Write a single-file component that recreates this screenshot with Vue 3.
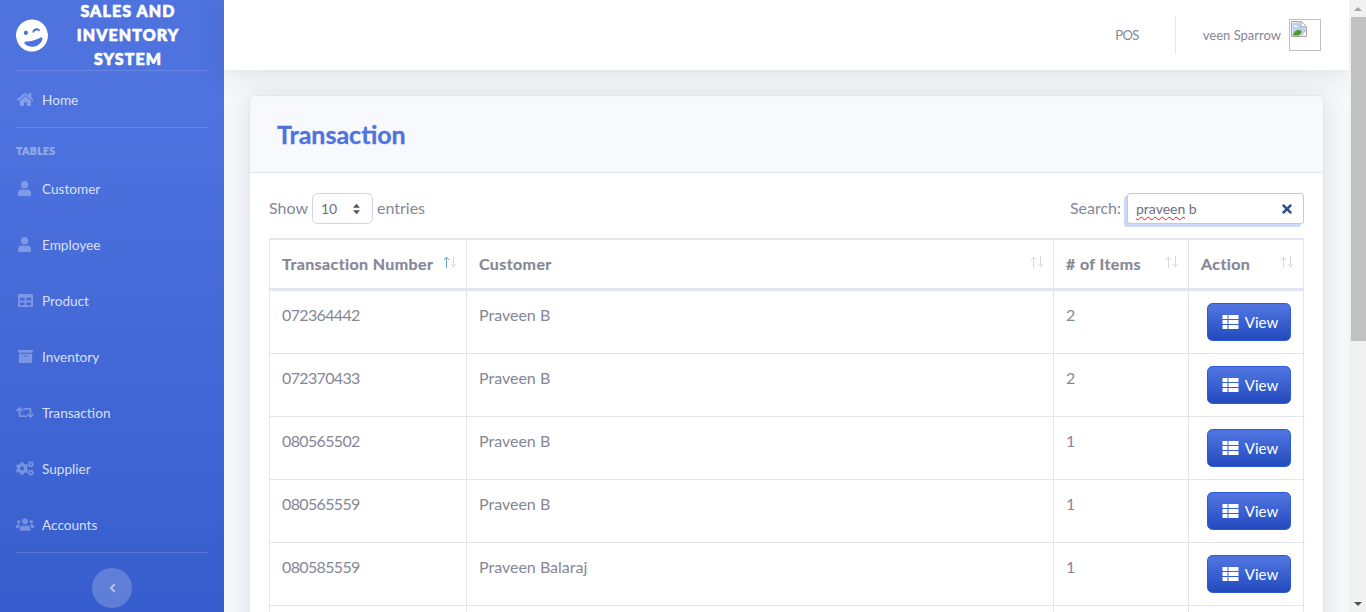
<script setup>
const icons = {
  home: { vb: '0 0 576 512', d: 'M280.37 148.26L96 300.11V464a16 16 0 0 0 16 16l112.06-.29a16 16 0 0 0 15.92-16V368a16 16 0 0 1 16-16h64a16 16 0 0 1 16 16v95.64a16 16 0 0 0 16 16.05L464 480a16 16 0 0 0 16-16V300L295.67 148.26a12.19 12.19 0 0 0-15.3 0zM571.6 251.47L488 182.56V44.05a12 12 0 0 0-12-12h-56a12 12 0 0 0-12 12v72.61L318.47 43a48 48 0 0 0-61 0L4.34 251.47a12 12 0 0 0-1.6 16.9l25.5 31A12 12 0 0 0 45.15 301l235.22-193.74a12.19 12.19 0 0 1 15.3 0L530.9 301a12 12 0 0 0 16.9-1.6l25.5-31a12 12 0 0 0-1.7-16.93z' },
  user: { vb: '0 0 448 512', d: 'M224 256c70.7 0 128-57.3 128-128S294.7 0 224 0 96 57.3 96 128s57.3 128 128 128zm89.6 32h-16.7c-22.2 10.2-46.9 16-72.9 16s-50.6-5.8-72.9-16h-16.7C60.2 288 0 348.2 0 422.4V464c0 26.5 21.5 48 48 48h352c26.5 0 48-21.5 48-48v-41.6c0-74.2-60.2-134.4-134.4-134.4z' },
  table: { vb: '0 0 512 512', d: 'M464 32H48C21.49 32 0 53.49 0 80v352c0 26.51 21.49 48 48 48h416c26.51 0 48-21.49 48-48V80c0-26.51-21.49-48-48-48zM224 416H64v-96h160v96zm0-160H64v-96h160v96zm224 160H288v-96h160v96zm0-160H288v-96h160v96z' },
  archive: { vb: '0 0 512 512', d: 'M32 448c0 17.7 14.3 32 32 32h384c17.7 0 32-14.3 32-32V160H32v288zm160-212c0-6.6 5.4-12 12-12h104c6.6 0 12 5.4 12 12v8c0 6.6-5.4 12-12 12H204c-6.6 0-12-5.4-12-12v-8zM480 32H32C14.3 32 0 46.3 0 64v48c0 8.8 7.2 16 16 16h480c8.8 0 16-7.2 16-16V64c0-17.7-14.3-32-32-32z' },
  retweet: { vb: '0 0 640 512', d: 'M629.657 343.598L528.971 444.284c-9.373 9.372-24.568 9.372-33.941 0L394.343 343.598c-9.373-9.373-9.373-24.569 0-33.941l10.823-10.823c9.562-9.562 25.133-9.34 34.419.492L480 342.118V160H292.451a24.005 24.005 0 0 1-16.971-7.029l-16-16C244.361 121.851 255.069 96 276.451 96H520c13.255 0 24 10.745 24 24v222.118l40.416-42.792c9.285-9.831 24.856-10.054 34.419-.492l10.823 10.823c9.372 9.372 9.372 24.568-.001 33.941zm-265.138 15.431A23.999 23.999 0 0 0 347.548 352H160V169.881l40.416 42.792c9.286 9.831 24.856 10.054 34.419.491l10.822-10.822c9.373-9.373 9.373-24.569 0-33.941L144.971 67.716c-9.373-9.373-24.569-9.373-33.941 0L10.343 168.402c-9.373 9.373-9.373 24.569 0 33.941l10.822 10.822c9.562 9.562 25.133 9.34 34.419-.491L96 169.881V392c0 13.255 10.745 24 24 24h243.549c21.382 0 32.09-25.851 16.971-40.971l-16.001-16z' },
  cogs: { vb: '0 0 640 512', d: 'M512.1 191l-8.2 14.3c-3 5.3-9.4 7.5-15.1 5.4-11.8-4.4-22.6-10.7-32.1-18.6-4.6-3.8-5.8-10.5-2.8-15.7l8.2-14.3c-6.9-8-12.3-17.3-15.9-27.4h-16.5c-6 0-11.2-4.3-12.2-10.3-2-12-2.1-24.6 0-37.1 1-6 6.2-10.4 12.2-10.4h16.5c3.6-10.1 9-19.4 15.9-27.4l-8.2-14.3c-3-5.2-1.9-11.9 2.8-15.7 9.5-7.9 20.4-14.2 32.1-18.6 5.7-2.1 12.1.1 15.1 5.4l8.2 14.3c10.5-1.9 21.2-1.9 31.7 0L552 6.3c3-5.3 9.4-7.5 15.1-5.4 11.8 4.4 22.6 10.7 32.1 18.6 4.6 3.8 5.8 10.5 2.8 15.7l-8.2 14.3c6.9 8 12.3 17.3 15.9 27.4h16.5c6 0 11.2 4.3 12.2 10.3 2 12 2.1 24.6 0 37.1-1 6-6.2 10.4-12.2 10.4h-16.5c-3.6 10.1-9 19.4-15.9 27.4l8.2 14.3c3 5.2 1.9 11.9-2.8 15.7-9.5 7.9-20.4 14.2-32.1 18.6-5.7 2.1-12.1-.1-15.1-5.4l-8.2-14.3c-10.4 1.9-21.2 1.9-31.7 0zm-10.5-58.8c38.5 29.6 82.4-14.3 52.8-52.8-38.5-29.7-82.4 14.3-52.8 52.8zM386.3 286.1l33.7 16.8c10.1 5.8 14.5 18.1 10.5 29.1-8.9 24.2-26.4 46.4-42.6 65.8-7.4 8.9-20.2 11.1-30.3 5.3l-29.1-16.8c-16 13.7-34.6 24.6-54.9 31.7v33.6c0 11.6-8.3 21.6-19.7 23.6-24.6 4.2-50.4 4.4-75.9 0-11.5-2-20-11.9-20-23.6V418c-20.3-7.2-38.9-18-54.9-31.7L74 403c-10 5.8-22.9 3.6-30.3-5.3-16.2-19.4-33.3-41.6-42.2-65.7-4-10.9.4-23.2 10.5-29.1l33.3-16.8c-3.9-20.9-3.9-42.4 0-63.4L12 205.8c-10.1-5.8-14.6-18.1-10.5-29 8.9-24.2 26-46.4 42.2-65.8 7.4-8.9 20.2-11.1 30.3-5.3l29.1 16.8c16-13.7 34.6-24.6 54.9-31.7V57.1c0-11.5 8.2-21.5 19.6-23.5 24.6-4.2 50.5-4.4 76-.1 11.5 2 20 11.9 20 23.6v33.6c20.3 7.2 38.9 18 54.9 31.7l29.1-16.8c10-5.8 22.9-3.6 30.3 5.3 16.2 19.4 33.2 41.6 42.1 65.8 4 10.9.1 23.2-10 29.1l-33.7 16.8c3.9 21 3.9 42.5 0 63.5zm-117.6 21.1c59.2-77-28.7-164.9-105.7-105.7-59.2 77 28.7 164.9 105.7 105.7zm243.4 182.7l-8.2 14.3c-3 5.3-9.4 7.5-15.1 5.4-11.8-4.4-22.6-10.7-32.1-18.6-4.6-3.8-5.8-10.5-2.8-15.7l8.2-14.3c-6.9-8-12.3-17.3-15.9-27.4h-16.5c-6 0-11.2-4.3-12.2-10.3-2-12-2.1-24.6 0-37.1 1-6 6.2-10.4 12.2-10.4h16.5c3.6-10.1 9-19.4 15.9-27.4l-8.2-14.3c-3-5.2-1.9-11.9 2.8-15.7 9.5-7.9 20.4-14.2 32.1-18.6 5.7-2.1 12.1.1 15.1 5.4l8.2 14.3c10.5-1.9 21.2-1.9 31.7 0l8.2-14.3c3-5.3 9.4-7.5 15.1-5.4 11.8 4.4 22.6 10.7 32.1 18.6 4.6 3.8 5.8 10.5 2.8 15.7l-8.2 14.3c6.9 8 12.3 17.3 15.9 27.4h16.5c6 0 11.2 4.3 12.2 10.3 2 12 2.1 24.6 0 37.1-1 6-6.2 10.4-12.2 10.4h-16.5c-3.6 10.1-9 19.4-15.9 27.4l8.2 14.3c3 5.2 1.9 11.9-2.8 15.7-9.5 7.9-20.4 14.2-32.1 18.6-5.7 2.1-12.1-.1-15.1-5.4l-8.2-14.3c-10.4 1.9-21.2 1.9-31.7 0zM501.6 431c38.5 29.6 82.4-14.3 52.8-52.8-38.5-29.6-82.4 14.3-52.8 52.8z' },
  users: { vb: '0 0 640 512', d: 'M96 224c35.3 0 64-28.7 64-64s-28.7-64-64-64-64 28.7-64 64 28.7 64 64 64zm448 0c35.3 0 64-28.7 64-64s-28.7-64-64-64-64 28.7-64 64 28.7 64 64 64zm32 32h-64c-17.6 0-33.5 7.1-45.1 18.6 40.3 22.1 68.9 62 75.1 109.4h66c17.7 0 32-14.3 32-32v-32c0-35.3-28.7-64-64-64zm-256 0c61.9 0 112-50.1 112-112S381.9 32 320 32 208 82.1 208 144s50.1 112 112 112zm76.8 32h-8.3c-20.8 10-43.9 16-68.5 16s-47.6-6-68.5-16h-8.3C179.6 288 128 339.6 128 403.2V432c0 26.5 21.5 48 48 48h288c26.5 0 48-21.5 48-48v-28.8c0-63.6-51.6-115.2-115.2-115.2zm-223.7-13.4C161.5 263.1 145.6 256 128 256H64c-35.3 0-64 28.7-64 64v32c0 17.7 14.3 32 32 32h65.9c6.3-47.4 34.9-87.3 75.2-109.4z' }
}
const navItems = [
  { label: 'Customer', icon: 'user' },
  { label: 'Employee', icon: 'user' },
  { label: 'Product', icon: 'table' },
  { label: 'Inventory', icon: 'archive' },
  { label: 'Transaction', icon: 'retweet' },
  { label: 'Supplier', icon: 'cogs' },
  { label: 'Accounts', icon: 'users' }
]
const columns = [
  { label: 'Transaction Number', width: 197, active: true },
  { label: 'Customer', width: 587 },
  { label: '# of Items', width: 135 },
  { label: 'Action', width: 115 }
]
const rows = [
  { id: '072364442', name: 'Praveen B', items: 2 },
  { id: '072370433', name: 'Praveen B', items: 2 },
  { id: '080565502', name: 'Praveen B', items: 1 },
  { id: '080565559', name: 'Praveen B', items: 1 },
  { id: '080585559', name: 'Praveen Balaraj', items: 1 }
]
</script>

<template>
  <div class="page">
    <aside class="sidebar">
      <div class="brand">
        <svg class="brand-icon" viewBox="0 0 496 512"><path fill="#fff" d="M248 8C111 8 0 119 0 256s111 248 248 248 248-111 248-248S385 8 248 8zm20.1 198.1c4-25.2 34.2-42.1 59.9-42.1s55.9 16.9 59.9 42.1c1.7 11.1-11.4 18.3-19.8 10.8l-9.5-8.5c-14.8-13.2-46.2-13.2-61 0L288 217c-8.4 7.4-21.6.3-19.9-10.9zM168 160c17.7 0 32 14.3 32 32s-14.3 32-32 32-32-14.3-32-32 14.3-32 32-32zm80 272c-60.6 0-134.5-38.3-143.8-93.3-2-11.9 9.4-21.6 20.8-17.9C155.1 330.5 200 336 248 336s92.9-5.5 123-15.2c11.5-3.7 22.8 6.1 20.8 17.9-9.3 55-83.2 93.3-143.8 93.3z"/></svg>
        <div class="brand-text">SALES AND INVENTORY SYSTEM</div>
      </div>
      <hr class="divider" />
      <a class="nav-link">
        <span class="nav-icon"><svg :viewBox="icons.home.vb"><path :d="icons.home.d"/></svg></span>
        <span>Home</span>
      </a>
      <hr class="divider" />
      <div class="heading">TABLES</div>
      <a v-for="item in navItems" :key="item.label" class="nav-link">
        <span class="nav-icon"><svg :viewBox="icons[item.icon].vb"><path :d="icons[item.icon].d"/></svg></span>
        <span>{{ item.label }}</span>
      </a>
      <hr class="divider" />
      <div class="toggle-wrap">
        <button class="toggle">
          <svg viewBox="0 0 256 512"><path d="M31.7 239l136-136c9.4-9.4 24.6-9.4 33.9 0l22.6 22.6c9.4 9.4 9.4 24.6 0 33.9L127.9 256l96.4 96.4c9.4 9.4 9.4 24.6 0 33.9L201.7 409c-9.4 9.4-24.6 9.4-33.9 0l-136-136c-9.5-9.4-9.5-24.6-.1-34z"/></svg>
        </button>
      </div>
    </aside>

    <div class="main">
      <header class="topbar">
        <span class="top-link">POS</span>
        <span class="top-sep"></span>
        <span class="top-user">veen Sparrow</span>
        <span class="avatar">
          <svg viewBox="0 0 16 16" width="16" height="16">
            <path d="M.5.5h10l5 5v10H.5z" fill="#fff" stroke="#a8a8a8"/>
            <path d="M1.5 1.5h8.500v4.500h4.500v3L9 14.500H1.500z" fill="#bcd0f5"/>
            <path d="M1.500 14.500c1.500-4 4-6 6.500-5.500 1.500.3 2.500 1.500 3 2l-3 3.500z" fill="#4f9a2a"/>
            <path d="M3 4.500h3v1.500H3z" fill="#fff"/>
            <path d="M15 9l-5 6M10 .8v5h5" fill="none" stroke="#a8a8a8"/>
          </svg>
        </span>
      </header>

      <section class="content">
        <div class="card">
          <div class="card-head"><h1>Transaction</h1></div>
          <div class="card-body">
            <div class="tools">
              <div class="show">
                <span class="label">Show</span>
                <span class="select">
                  <span>10</span>
                  <svg viewBox="0 0 10 14" width="9" height="12"><path d="M5 1l4 4.500H1zM5 13l4-4.500H1z" fill="#4f5263"/></svg>
                </span>
                <span class="label">entries</span>
              </div>
              <div class="search">
                <span class="label search-label">Search:</span>
                <span class="search-box">
                  <span class="search-text"><span class="misspelt">praveen</span> b</span>
                  <svg viewBox="0 0 352 512" width="10" height="14"><path fill="#2c4f8f" d="M242.72 256l100.07-100.07c12.28-12.28 12.28-32.19 0-44.48l-22.24-22.24c-12.28-12.28-32.19-12.28-44.48 0L176 189.28 75.93 89.21c-12.28-12.28-32.19-12.28-44.48 0L9.21 111.45c-12.28 12.28-12.28 32.19 0 44.48L109.28 256 9.21 356.07c-12.28 12.28-12.28 32.19 0 44.48l22.24 22.24c12.28 12.28 32.2 12.28 44.48 0L176 322.72l100.07 100.07c12.28 12.28 32.2 12.28 44.48 0l22.24-22.24c12.28-12.28 12.28-32.19 0-44.48L242.72 256z"/></svg>
                </span>
              </div>
            </div>

            <table class="grid">
              <colgroup>
                <col v-for="c in columns" :key="c.label" :style="{ width: c.width + 'px' }" />
              </colgroup>
              <thead>
                <tr>
                  <th v-for="c in columns" :key="c.label">
                    {{ c.label }}
                    <svg class="arrow up" :class="{ active: c.active }" viewBox="0 0 7 12" width="7" height="12"><path d="M3.500 12V1M1 4l2.500-3L6 4"/></svg>
                    <svg class="arrow down" viewBox="0 0 7 12" width="7" height="12"><path d="M3.500 0v11M1 8l2.500 3L6 8"/></svg>
                  </th>
                </tr>
              </thead>
              <tbody>
                <tr v-for="r in rows" :key="r.id">
                  <td class="num">{{ r.id }}</td>
                  <td>{{ r.name }}</td>
                  <td>{{ r.items }}</td>
                  <td class="action">
                    <button class="view">
                      <svg viewBox="0 0 16 14" width="17" height="14"><path fill="#fff" d="M0 0h5v4H0zM6 0h10v4H6zM0 5h5v4H0zM6 5h10v4H6zM0 10h5v4H0zM6 10h10v4H6z"/></svg>
                      <span>View</span>
                    </button>
                  </td>
                </tr>
                <tr class="blank"><td></td><td></td><td></td><td></td></tr>
              </tbody>
            </table>
          </div>
        </div>
      </section>
    </div>

    <div class="scrollbar">
      <span class="scroll-btn"><i class="tri up"></i></span>
      <span class="thumb"></span>
      <span class="scroll-space"></span>
      <span class="scroll-btn"><i class="tri down"></i></span>
    </div>
  </div>
</template>

<style>
html, body { margin: 0; height: 612px; overflow: hidden; }
</style>

<style scoped>
.page {
  display: flex;
  width: 1366px;
  height: 612px;
  overflow: hidden;
  background: #f8f9fc;
  font-family: Lato, "Noto Sans", sans-serif;
  color: #858796;
  font-size: 16px;
}
.sidebar {
  width: 224px;
  flex: none;
  height: 612px;
  overflow: hidden;
  background-image: linear-gradient(180deg, #4e73df 10%, #224abe 100%);
  background-size: 100% 1077px;
  background-repeat: no-repeat;
  display: flex;
  flex-direction: column;
}
.brand {
  height: 70px;
  flex: none;
  display: flex;
  align-items: center;
  padding-left: 16px;
  box-sizing: border-box;
}
.brand-icon {
  width: 32px;
  height: 33px;
  flex: none;
  transform: rotate(-15deg);
}
.brand-text {
  width: 128px;
  margin-left: 16px;
  color: #fff;
  font-weight: 900;
  font-size: 16px;
  line-height: 24px;
  letter-spacing: 1.1px;
  text-align: center;
  -webkit-text-stroke: 0.7px #fff;
}
.divider {
  margin: 0 16px;
  border: 0;
  height: 1px;
  flex: none;
  background: rgba(255, 255, 255, 0.15);
}
.nav-link {
  height: 56px;
  flex: none;
  box-sizing: border-box;
  padding: 1px 0 0 16px;
  display: flex;
  align-items: center;
  color: rgba(255, 255, 255, 0.8);
  font-size: 13.6px;
}
.nav-icon {
  width: 18px;
  margin-right: 8px;
  display: flex;
  justify-content: center;
}
.nav-icon svg {
  height: 15px;
  fill: rgba(255, 255, 255, 0.3);
}
.heading {
  height: 32px;
  flex: none;
  box-sizing: border-box;
  padding: 16px 0 0 16px;
  font-size: 10.4px;
  line-height: 14px;
  font-weight: 800;
  letter-spacing: 0.4px;
  color: rgba(255, 255, 255, 0.4);
  -webkit-text-stroke: 0.2px rgba(255, 255, 255, 0.4);
}
.toggle-wrap {
  display: flex;
  justify-content: center;
  padding-top: 15px;
}
.toggle {
  width: 40px;
  height: 40px;
  border: 0;
  padding: 0;
  border-radius: 50%;
  background: rgba(255, 255, 255, 0.2);
  display: flex;
  align-items: center;
  justify-content: center;
}
.toggle svg {
  height: 14px;
  fill: rgba(255, 255, 255, 0.5);
}
.main {
  flex: 1;
  min-width: 0;
  display: flex;
  flex-direction: column;
}
.topbar {
  height: 70px;
  flex: none;
  background: #fff;
  display: flex;
  align-items: center;
  justify-content: flex-end;
  padding-right: 28px;
  font-size: 13px;
  box-shadow: 0 2.4px 28px 0 rgba(58, 59, 69, 0.15);
  position: relative;
  z-index: 1;
}
.top-link { letter-spacing: -0.6px; }
.top-sep {
  width: 1px;
  height: 38px;
  background: #e3e6f0;
  margin: 0 27px 0 36px;
}
.top-user { margin-right: 8px; }
.avatar {
  display: block;
  box-sizing: content-box;
  width: 28px;
  height: 28px;
  padding: 1px;
  border: 1px solid #c0c0c0;
}
.avatar svg { display: block; }
.content {
  flex: 1;
  min-height: 0;
  padding: 25px 25px 0;
}
.card {
  background: #fff;
  border: 1px solid #e3e6f0;
  border-radius: 5.6px;
  box-shadow: 0 2.4px 28px 0 rgba(58, 59, 69, 0.15);
  height: 600px;
  box-sizing: border-box;
}
.card-head {
  height: 77px;
  box-sizing: border-box;
  background: #f8f9fc;
  border-bottom: 1px solid #e3e6f0;
  border-radius: 5.6px 5.6px 0 0;
  display: flex;
  align-items: center;
  padding-left: 27px;
}
.card-head h1 {
  margin: 0;
  font-size: 25px;
  font-weight: 700;
  color: #4e73df;
  -webkit-text-stroke: 0.3px #4e73df;
}
.card-body { padding: 20px 19px; }
.tools {
  display: flex;
  justify-content: space-between;
  height: 31px;
  margin-bottom: 14px;
}
.show, .search {
  display: flex;
  align-items: center;
  gap: 4px;
}
.label { padding-bottom: 3px; }
.search-label { padding-bottom: 2px; }
.select {
  width: 61px;
  height: 31px;
  box-sizing: border-box;
  border: 1px solid #d1d3e2;
  border-radius: 5.6px;
  display: flex;
  align-items: center;
  justify-content: space-between;
  padding: 0 11px 0 8px;
  font-size: 14px;
  color: #6e707e;
}
.search-box {
  width: 177px;
  height: 31px;
  margin-left: 2px;
  box-sizing: border-box;
  background: #fff;
  border: 1px solid #bac8f3;
  border-radius: 3px;
  box-shadow: -3px 3px 0 0 #ced7f6;
  display: flex;
  align-items: center;
  justify-content: space-between;
  padding: 0 11px 0 8px;
  font-size: 14px;
  color: #6e707e;
}
.misspelt {
  text-decoration: underline wavy #e02020;
  text-decoration-thickness: 1px;
  text-underline-offset: 2px;
}
.grid {
  width: 1034px;
  table-layout: fixed;
  border-collapse: collapse;
  color: #858796;
}
.grid th {
  position: relative;
  height: 50px;
  box-sizing: border-box;
  padding: 0 12px;
  text-align: left;
  font-weight: 700;
  letter-spacing: 0.4px;
  -webkit-text-stroke: 0.2px #858796;
  white-space: nowrap;
  border: 1px solid #e3e6f0;
  border-top-width: 2px;
  border-bottom-width: 3px;
}
.grid td {
  height: 62px;
  box-sizing: border-box;
  padding: 12px;
  vertical-align: top;
  line-height: 24px;
  border: 1px solid #e3e6f0;
}
.grid .num { letter-spacing: -0.65px; }
.grid .action { padding-left: 18px; }
.arrow {
  position: absolute;
  top: 16px;
  fill: none;
  stroke: #858796;
  stroke-width: 1;
  opacity: 0.3;
}
.arrow.up { right: 16px; }
.arrow.down { right: 9px; }
.arrow.up.active { stroke: #6aa3d8; opacity: 1; }
.view {
  width: 84px;
  height: 38px;
  border: 1px solid #2e59d9;
  border-radius: 5.6px;
  background: linear-gradient(180deg, #4e73df 10%, #224abe 100%);
  color: #fff;
  font: inherit;
  font-size: 15px;
  display: flex;
  align-items: center;
  justify-content: center;
  gap: 6px;
  padding: 0 0 0 2px;
}
.scrollbar {
  width: 17px;
  flex: none;
  background: #f1f1f1;
  display: flex;
  flex-direction: column;
  position: relative;
  z-index: 2;
}
.scroll-btn {
  height: 17px;
  flex: none;
  display: flex;
  align-items: center;
  justify-content: center;
}
.thumb {
  height: 324px;
  flex: none;
  margin-left: 2px;
  background: #c1c1c1;
}
.scroll-space { flex: 1; }
.tri {
  width: 0;
  height: 0;
  border-left: 4px solid transparent;
  border-right: 4px solid transparent;
}
.tri.up { border-bottom: 4px solid #a3a3a3; }
.tri.down { border-top: 4px solid #505050; }
</style>
